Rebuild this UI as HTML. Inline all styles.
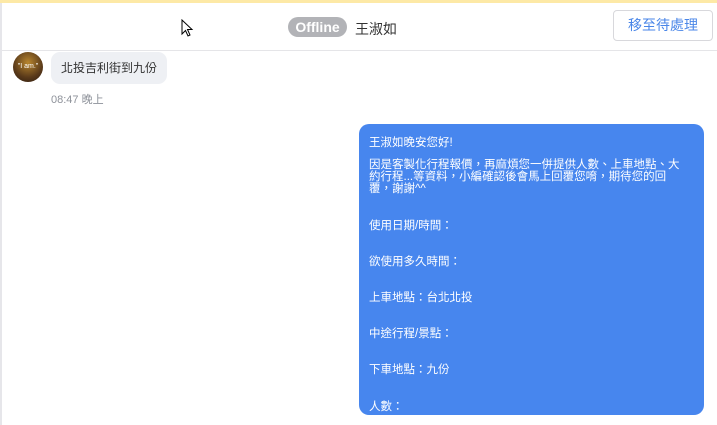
<html><head><style>
body{margin:0;width:717px;height:425px;overflow:hidden;background:#fff;font-family:"Liberation Sans","Noto Sans CJK TC",sans-serif;position:relative}
.a{position:absolute;white-space:nowrap}
.t{position:absolute;left:10px;font-size:11.5px;color:#fff;line-height:12px;white-space:nowrap}
</style></head><body>
<div class="a" style="left:0;top:0;width:717px;height:3px;background:#fde9a6"></div>
<div class="a" style="left:0;top:3px;width:2px;height:422px;background:#e6e6ea"></div>
<div class="a" style="left:2px;top:50px;width:715px;height:1px;background:#e5e5e8"></div>
<div class="a" style="left:288px;top:17px;width:59px;height:20px;border-radius:10px;background:#b2b3b7;color:#fff;font-weight:bold;font-size:14px;line-height:20px;text-align:center">Offline</div>
<div class="a" style="left:355px;top:19px;font-size:14px;color:#333">王淑如</div>
<div class="a" style="left:613px;top:10px;width:100px;height:31px;border:1px solid #d8d8dc;border-radius:4px;box-sizing:border-box;color:#4a86e8;font-size:14px;line-height:29px;text-align:center">移至待處理</div>
<div class="a" style="left:13px;top:52px;width:30px;height:30px;border-radius:50%;background:radial-gradient(circle at 50% 35%,#b8862e,#5a3a1a 60%,#2a1a10);color:#fff;font-size:7px;line-height:30px;text-align:center">"I am."</div>
<div class="a" style="left:51px;top:52px;width:116px;height:32px;border-radius:9px;background:#eef0f4;font-size:12px;color:#333;line-height:32px;text-align:center">北投吉利街到九份</div>
<div class="a" style="left:51px;top:91px;font-size:11px;color:#8e929a">08:47 晚上</div>
<div class="a" style="left:359px;top:124px;width:345px;height:291px;border-radius:10px;background:#4786ee">
<div class="t" style="top:13px">王淑如晚安您好!</div>
<div class="t" style="top:35px">因是客製化行程報價，再麻煩您一併提供人數、上車地點、大</div>
<div class="t" style="top:47px">約行程...等資料，小編確認後會馬上回覆您唷，期待您的回</div>
<div class="t" style="top:59px">覆，謝謝^^</div>
<div class="t" style="top:96px">使用日期/時間：</div>
<div class="t" style="top:132px">欲使用多久時間：</div>
<div class="t" style="top:168px">上車地點：台北北投</div>
<div class="t" style="top:204px">中途行程/景點：</div>
<div class="t" style="top:240px">下車地點：九份</div>
<div class="t" style="top:277px">人數：</div>
</div>
<svg class="a" style="left:181px;top:19px" width="14" height="20" viewBox="0 0 14 20"><path d="M1 1 L1 15 L4.5 11.5 L7 17 L9 16 L6.5 10.5 L11 10.5 Z" fill="#fff" stroke="#000" stroke-width="1"/></svg>
</body></html>
